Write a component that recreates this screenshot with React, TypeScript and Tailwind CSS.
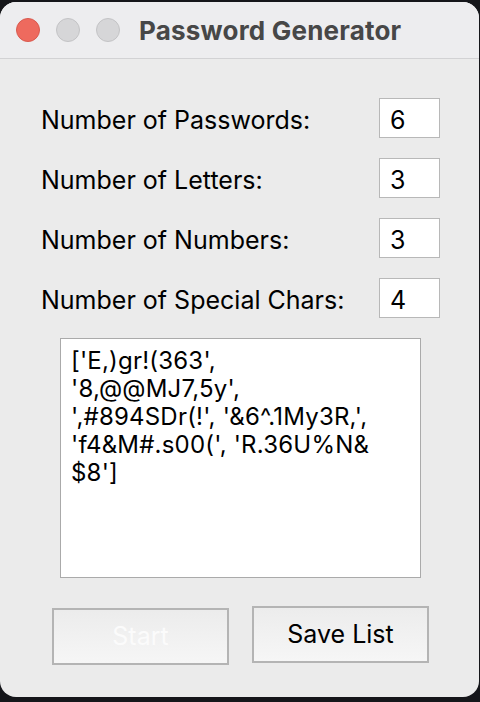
import React from 'react';

const font = { fontFamily: 'Inter, "Liberation Sans", Arial, sans-serif' };

const fields = [
    { label: 'Number of Passwords:', value: '6' },
    { label: 'Number of Letters:', value: '3' },
    { label: 'Number of Numbers:', value: '3' },
    { label: 'Number of Special Chars:', value: '4' },
];

const output = [
    "['E,)gr!(363',",
    "'8,@@MJ7,5y',",
    "',#894SDr(!', '&6^.1My3R,',",
    "'f4&M#.s00(', 'R.36U%N&",
    "$8']",
];

const App = () => {
    return (
        <div className="w-[480px] h-[702px] bg-[#15161a] pt-[2px]" style={font}>
            <div className="w-[479px] h-[695px] bg-[#ebebeb] rounded-[16px] overflow-hidden flex flex-col">
                {/* Title bar */}
                <div className="h-[57px] shrink-0 bg-[#ededef] border-b border-[#d2d2d4] flex items-center pl-[16px]">
                    <div className="flex items-center gap-[16px]">
                        <span className="w-[24px] h-[24px] rounded-full bg-[#ee6a5e] border border-[#d85a4f]" />
                        <span className="w-[24px] h-[24px] rounded-full bg-[#d6d6d8] border border-[#c3c3c5]" />
                        <span className="w-[24px] h-[24px] rounded-full bg-[#d6d6d8] border border-[#c3c3c5]" />
                    </div>
                    <span className="ml-[19px] text-[26px] font-bold text-[#474747] tracking-[0.2px]">Password Generator</span>
                </div>

                {/* Form */}
                <div className="flex flex-col gap-[20px] pt-[39px] pl-[41px] pr-[39px]">
                    {fields.map((f) => (
                        <div key={f.label} className="flex items-center justify-between h-[40px]">
                            <span className="text-[25px] text-black pt-[6px]">{f.label}</span>
                            <div className="w-[61px] h-[40px] bg-white border border-[#b8b8b8] flex items-center pl-[10px] pt-[5px] text-[25px] text-black">
                                {f.value}
                            </div>
                        </div>
                    ))}
                </div>

                {/* Output list */}
                <div className="ml-[60px] mt-[20px] w-[361px] h-[240px] bg-white border border-[#aaaaaa] pl-[10px] pt-[8px] text-[24px] leading-[28px] tracking-[0.2px] text-black">
                    {output.map((line, i) => (
                        <div key={i} className="whitespace-pre">{line}</div>
                    ))}
                </div>

                {/* Buttons */}
                <div className="flex items-start gap-[23px] pl-[52px] mt-[28px]">
                    <button className="mt-[2px] w-[177px] h-[57px] border-2 border-[#b4b4b4] bg-gradient-to-b from-[#ececec] to-[#f6f6f6] text-[25px] text-[#fbfbfb]">
                        Start
                    </button>
                    <button className="w-[177px] h-[57px] border-2 border-[#b4b4b4] bg-gradient-to-b from-[#ececec] to-[#f6f6f6] text-[25px] text-black">
                        Save List
                    </button>
                </div>
            </div>
        </div>
    );
};

export default App;
